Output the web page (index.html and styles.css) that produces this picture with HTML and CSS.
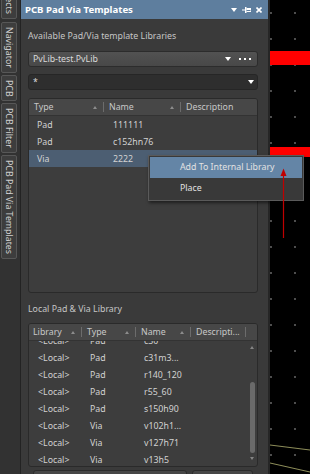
FILE: index.html
```html
<!DOCTYPE html>
<html lang="en">

<head>
    <meta charset="UTF-8">
    <meta name="viewport" content="width=device-width, initial-scale=1.0">
    <title>PCB Pad Via Templates</title>
    <link rel="stylesheet" href="styles.css">
</head>

<body>
    <div class="app">
        <nav class="dock">
            <div class="tab tab-cut">Projects</div>
            <div class="tab">Navigator</div>
            <div class="tab">PCB</div>
            <div class="tab">PCB Filter</div>
            <div class="tab">PCB Pad Via Templates</div>
        </nav>

        <section class="panel">
            <header class="panel-head">
                <span class="panel-title">PCB Pad Via Templates</span>
                <span class="head-icons">
                    <svg width="6" height="4" viewBox="0 0 6 4"><path d="M0 0h6L3 4z" fill="#fff"/></svg>
                    <svg width="9" height="6" viewBox="0 0 9 6"><path d="M0 3h3" stroke="#fff" stroke-width="1"/><rect x="3" y="0" width="1.5" height="6" fill="#fff"/><rect x="4.5" y="1" width="4.5" height="4" fill="#fff"/><path d="M4.5 3.5h4" stroke="#5e7e9e" stroke-width="1"/></svg>
                    <svg width="6" height="6" viewBox="0 0 6 6"><path d="M0.5 0.5l5 5M5.5 0.5l-5 5" stroke="#fff" stroke-width="1.6"/></svg>
                </span>
            </header>

            <div class="panel-body">
                <div class="label">Available Pad/Via template Libraries</div>

                <div class="combo combo-lib">
                    <span class="combo-text">PvLib-test.PvLib</span>
                    <span class="caret"></span>
                    <span class="more"><i></i><i></i><i></i></span>
                </div>

                <div class="combo combo-filter">
                    <span class="combo-text">*</span>
                    <span class="caret"></span>
                </div>

                <div class="grid-table table-templates">
                    <div class="thead">
                        <div class="th">Type<span class="sort"></span></div>
                        <div class="th">Name<span class="sort"></span></div>
                        <div class="th th-plain">Description</div>
                    </div>
                    <div class="row"><span>Pad</span><span>111111</span><span></span></div>
                    <div class="row"><span>Pad</span><span>c152hn76</span><span></span></div>
                    <div class="row selected"><span>Via</span><span>2222</span><span></span></div>
                </div>

                <div class="label label-local">Local Pad &amp; Via Library</div>

                <div class="grid-table table-local">
                    <div class="thead">
                        <div class="th th-first">Library<span class="sort"></span></div>
                        <div class="th">Type<span class="sort"></span></div>
                        <div class="th">Name<span class="sort"></span></div>
                        <div class="th th-nosort">Descripti...</div>
                        <div></div>
                    </div>
                    <div class="tbody">
                        <div class="rows">
                            <div class="row"><span>&lt;Local&gt;</span><span>Pad</span><span>c30</span><span></span></div>
                            <div class="row"><span>&lt;Local&gt;</span><span>Pad</span><span>c31m3...</span><span></span></div>
                            <div class="row"><span>&lt;Local&gt;</span><span>Pad</span><span>r140_120</span><span></span></div>
                            <div class="row"><span>&lt;Local&gt;</span><span>Pad</span><span>r55_60</span><span></span></div>
                            <div class="row"><span>&lt;Local&gt;</span><span>Pad</span><span>s150h90</span><span></span></div>
                            <div class="row"><span>&lt;Local&gt;</span><span>Via</span><span>v102h1...</span><span></span></div>
                            <div class="row"><span>&lt;Local&gt;</span><span>Via</span><span>v127h71</span><span></span></div>
                            <div class="row"><span>&lt;Local&gt;</span><span>Via</span><span>v13h5</span><span></span></div>
                        </div>
                        <div class="scrollbar">
                            <span class="arrow-up"></span>
                            <span class="thumb"></span>
                            <span class="arrow-down"></span>
                        </div>
                    </div>
                </div>

                <div class="buttons">
                    <div class="btn btn-wide"></div>
                    <div class="btn"></div>
                </div>
            </div>
        </section>

        <div class="canvas">
            <div class="track track-top"></div>
            <div class="track track-mid"></div>
            <svg class="overlay" width="40" height="474" viewBox="0 0 40 474">
                <path d="M0 445L40 450" stroke="#8e8e5a" stroke-width="1"/>
                <path d="M0 463L40 472" stroke="#8e8e5a" stroke-width="1"/>
            </svg>
        </div>
    </div>

    <div class="context-menu">
        <div class="menu-item active">Add To Internal Library</div>
        <div class="menu-item">Place</div>
    </div>

    <!-- red annotation arrow drawn over everything -->
    <svg class="annotation" width="12" height="74" viewBox="0 0 12 74">
        <path d="M6.5 6V70" stroke="#c00000" stroke-width="1.2"/>
        <path d="M3.5 8L6.5 0.5L9.5 8z" fill="#c00000"/>
    </svg>
</body>

</html>
```

FILE: styles.css
```css
* {
    margin: 0;
    padding: 0;
    box-sizing: border-box;
}

body {
    width: 310px;
    height: 474px;
    overflow: hidden;
    position: relative;
    background: #000;
    font-family: "Noto Sans", "Liberation Sans", sans-serif;
    font-size: 8.8px;
    color: #d2d2d2;
}

.app {
    display: flex;
    height: 474px;
}

/* left dock with vertical tabs */
.dock {
    width: 21px;
    flex: none;
    background: #323232;
    border-right: 1px solid #232323;
    padding-left: 1px;
    display: flex;
    flex-direction: column;
    gap: 2px;
    overflow: hidden;
}

.tab {
    width: 16px;
    writing-mode: vertical-rl;
    background: #3d3d3d;
    border: 1px solid #575757;
    border-radius: 2px;
    padding: 4px 0;
    line-height: 14px;
    color: #d0d0d0;
    white-space: nowrap;
}

.tab-cut {
    margin-top: -24px;
    margin-bottom: 1px;
}

/* panel */
.panel {
    width: 249px;
    flex: none;
    background: #3a3a3a;
    border-right: 2px solid #262626;
    display: flex;
    flex-direction: column;
}

.panel-head {
    height: 19px;
    flex: none;
    background: #5e7e9e;
    display: flex;
    align-items: center;
    padding: 0 6px 0 4px;
    color: #fff;
}

.panel-title {
    flex: 1;
    font-weight: 700;
    font-size: 9.6px;
}

.head-icons {
    display: flex;
    align-items: center;
    gap: 5px;
}

.panel-body {
    padding: 9px 10px 0 7px;
    display: flex;
    flex-direction: column;
}

.label {
    line-height: 16px;
    color: #c6c6c6;
}

.label-local {
    margin-top: 8px;
}

.combo {
    margin-top: 7px;
    height: 16px;
    border-radius: 3px;
    display: flex;
    align-items: center;
    padding: 0 6px 0 4px;
}

.combo-lib {
    background: linear-gradient(#525252, #484848);
    border: 1px solid #2c2c2c;
}

.combo-filter {
    background: #2e2e2e;
    border: 1px solid #262626;
    padding-right: 3px;
}

.combo-text {
    flex: 1;
    color: #dadada;
}

.caret {
    width: 0;
    height: 0;
    border-left: 3px solid transparent;
    border-right: 3px solid transparent;
    border-top: 4px solid #fff;
}

.more {
    display: flex;
    gap: 3px;
    margin-left: 8px;
}

.more i {
    width: 2px;
    height: 2px;
    background: #fff;
}

/* tables */
.grid-table {
    margin-top: 8px;
    border: 1px solid #2a2a2a;
    border-radius: 3px;
    background: #3d3d3d;
    overflow: hidden;
}

.thead {
    display: grid;
    height: 17px;
    background: #474747;
    border-bottom: 1px solid #333;
    align-items: center;
    color: #c8c8c8;
}

.th {
    display: flex;
    align-items: center;
    padding-left: 5px;
    white-space: nowrap;
}

.th::after {
    content: "";
    width: 1px;
    height: 10px;
    background: #6c6c6c;
}

.th-plain::after {
    display: none;
}

.th-nosort::after {
    margin-left: auto;
}

.sort {
    margin-left: auto;
    margin-right: 6px;
    width: 0;
    height: 0;
    border-left: 2.5px solid transparent;
    border-right: 2.5px solid transparent;
    border-bottom: 3px solid #8c8c8c;
}

.row {
    display: grid;
    height: 17px;
    align-items: center;
    white-space: nowrap;
}

.row span {
    padding-left: 8px;
}

.table-templates {
    height: 195px;
}

.table-templates .thead,
.table-templates .row {
    grid-template-columns: 75px 77px 1fr;
}

.table-templates .th {
    padding-left: 5px;
}

.table-templates .row span:nth-child(2) {
    padding-left: 9px;
}

.row.selected {
    background: #4c5e72;
}

.table-local {
    margin-top: 6px;
    height: 144px;
}

.table-local .thead {
    grid-template-columns: 53px 54px 55px 55px 1fr;
}

.table-local .th-first {
    padding-left: 4px;
}

.tbody {
    height: 126px;
    display: grid;
    grid-template-columns: 1fr 9px;
    overflow: hidden;
}

.rows {
    margin-top: -9px;
}

.table-local .row {
    grid-template-columns: 53px 54px 55px 1fr;
}

.table-local .row span:first-child {
    padding-left: 9px;
}

.scrollbar {
    display: flex;
    flex-direction: column;
    align-items: center;
    padding-top: 5px;
    padding-right: 1px;
}

.arrow-up,
.arrow-down {
    width: 0;
    height: 0;
    border-left: 2.5px solid transparent;
    border-right: 2.5px solid transparent;
}

.arrow-up {
    border-bottom: 3px solid #858585;
}

.arrow-down {
    margin-top: 4px;
    border-top: 3px solid #858585;
}

.thumb {
    margin-top: 33px;
    width: 5px;
    height: 71px;
    border-radius: 3px;
    background: #6a6a6a;
}

.buttons {
    margin-top: 3px;
    padding: 0 4px 0 5px;
    display: flex;
    gap: 5px;
}

.btn {
    width: 61px;
    height: 20px;
    border: 1px solid #2b2b2b;
    border-radius: 3px;
    background: #464646;
}

.btn-wide {
    width: 154px;
}

/* canvas to the right */
.canvas {
    flex: 1;
    position: relative;
    overflow: hidden;
    background-color: #000;
    background-image: radial-gradient(circle, #505050 0 0.7px, transparent 0.9px);
    background-size: 24px 26px;
    background-position: -11px 0;
}

.track {
    position: absolute;
    left: 0;
    right: 0;
    background: #ff0000;
}

.track-top {
    top: 51px;
    height: 14px;
}

.track-mid {
    top: 147px;
    height: 10px;
}

.overlay {
    position: absolute;
    left: 0;
    top: 0;
}

/* context menu */
.context-menu {
    position: absolute;
    left: 148px;
    top: 155px;
    width: 156px;
    padding: 1px;
    background: #393939;
    border: 1px solid #5a5a5a;
    box-shadow: 1px 2px 3px rgba(0, 0, 0, 0.5);
}

.menu-item {
    height: 21px;
    line-height: 21px;
    padding-left: 30px;
    color: #e2e2e2;
}

.menu-item.active {
    background: #6485a6;
}

.annotation {
    position: absolute;
    left: 277px;
    top: 168px;
}
```
